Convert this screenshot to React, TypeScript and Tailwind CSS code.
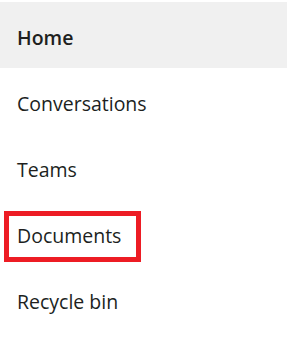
const items = ["Conversations", "Teams", "Documents", "Recycle bin"];

export default function App() {
  return (
    <div className="w-[287px] h-[341px] bg-white pt-[2px] font-['Open_Sans',sans-serif] text-[19.5px] leading-none text-[#201f1e]">
      <div className="h-[66px] flex items-center pl-[17px] pt-[6px] bg-[#f0f0f0] font-semibold">
        Home
      </div>
      {items.map((label) => (
        <div key={label} className="h-[66px] flex items-center pl-[4px] pt-[6px]">
          <div
            className={
              label === "Documents"
                ? "h-[51px] w-[137px] flex items-center pl-[8px] border-[5px] border-[#ed1c24]"
                : "pl-[13px]"
            }
          >
            {label}
          </div>
        </div>
      ))}
    </div>
  );
}
